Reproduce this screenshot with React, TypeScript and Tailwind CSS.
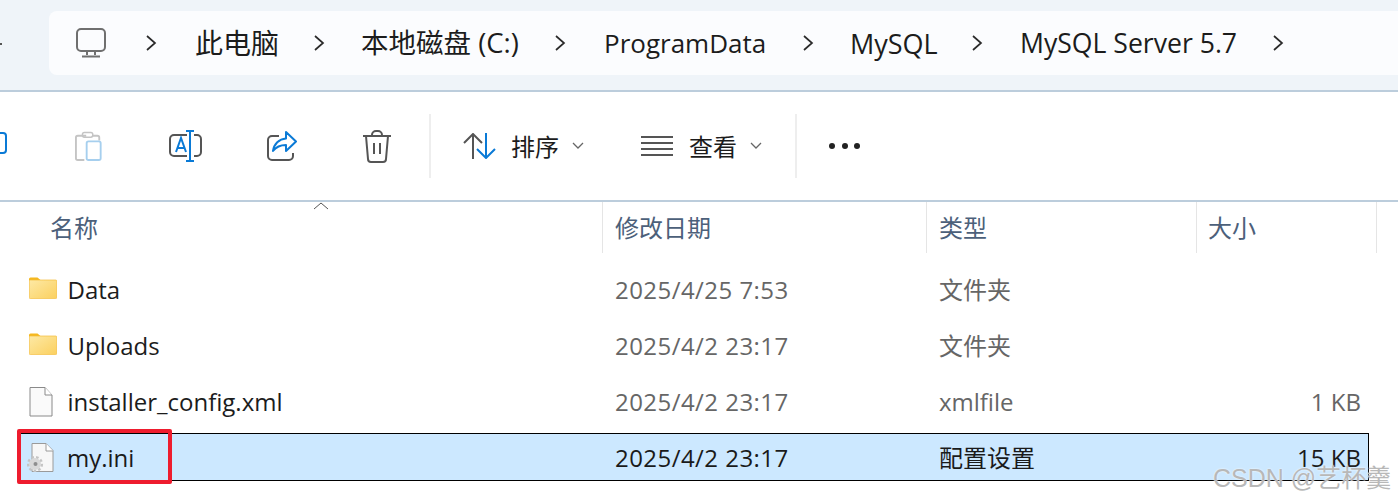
import type { ReactNode } from "react";

const font = { fontFamily: '"Open Sans", "Noto Sans CJK SC", sans-serif' };

function Chevron() {
  return (
    <svg width="12" height="18" viewBox="0 0 12 18" fill="none" className="shrink-0">
      <path d="M2 2l8 7-8 7" stroke="#2a2a2a" strokeWidth="1.7" />
    </svg>
  );
}

function Crumb({ children, w }: { children: ReactNode; w: string }) {
  return <span className={`leading-none text-[#1c1c1c] whitespace-nowrap shrink-0 ${w}`}>{children}</span>;
}

function FolderIcon() {
  return (
    <svg width="28" height="22" viewBox="0 0 28 22" className="shrink-0 mb-[5px]">
      <defs>
        <linearGradient id="fold" x1="0" y1="0" x2="1" y2="1">
          <stop offset="0" stopColor="#fde9a5" />
          <stop offset="1" stopColor="#fbd05f" />
        </linearGradient>
      </defs>
      <path d="M0 2A1.5 1.5 0 0 1 1.5 .5h7L12 3.5h-12z" fill="#f5b81f" />
      <rect x=".3" y="3" width="27.4" height="18.6" rx="1" fill="url(#fold)" stroke="#f3bc3a" strokeWidth="0.7" />
    </svg>
  );
}

function FileIcon() {
  return (
    <svg width="24" height="30" viewBox="0 0 24 30" className="shrink-0">
      <path d="M1 .5h15l7 7.5v21H1z" fill="#fafafa" stroke="#8a8a8a" />
      <path d="M16 .5V8h7" fill="#fff" stroke="#8a8a8a" />
    </svg>
  );
}

function IniIcon() {
  return (
    <svg width="27" height="30" viewBox="0 0 27 30" className="shrink-0">
      <path d="M5 .5h14l7 7v21H5z" fill="#f7f7f7" stroke="#9a9a9a" />
      <path d="M19 .5V8h7" fill="#fff" stroke="#9a9a9a" />
      <circle cx="8" cy="21" r="6.8" fill="none" stroke="#c4c4c4" strokeWidth="2.6" strokeDasharray="2.6 2.1" />
      <circle cx="8" cy="21" r="6" fill="#d9d9d9" />
      <path d="M8 17.5a3.5 3.5 0 0 0 0 7 3 3 0 0 1 0-7z" fill="#7d7d7d" />
      <circle cx="8.5" cy="21" r="2" fill="#8e8e8e" />
    </svg>
  );
}

const rows = [
  { name: "Data", date: "2025/4/25 7:53", type: "文件夹", size: "", icon: <FolderIcon /> },
  { name: "Uploads", date: "2025/4/2 23:17", type: "文件夹", size: "", icon: <FolderIcon /> },
  { name: "installer_config.xml", date: "2025/4/2 23:17", type: "xmlfile", size: "1 KB", icon: <FileIcon /> },
];

export default function App() {
  return (
    <div className="relative w-[1398px] h-[501px] overflow-hidden bg-white" style={font}>
      {/* tip of the forward arrow, cut off by the crop */}
      <div className="absolute left-0 top-[43px] w-[2px] h-[2px] bg-[#555]" />

      {/* address bar */}
      <div className="h-[92px] bg-[#eff4f9] border-b-2 border-[#bccddc] pt-[11px] pl-[49px]">
        <div className="h-16 bg-[#fbfcfe] rounded-l-lg flex items-center pl-[27px]">
          <svg width="30" height="30" viewBox="0 0 30 30" fill="none" className="shrink-0 mr-[39px]">
            <rect x="1" y="1" width="28" height="22" rx="4" stroke="#6f6f6f" strokeWidth="2" />
            <path d="M11 23v4M19 23v4M6 28.5h18" stroke="#6f6f6f" strokeWidth="2" />
          </svg>
          <Chevron />
          <Crumb w="text-[28px] w-[84px] ml-[38px] mr-[34px]">此电脑</Crumb>
          <Chevron />
          <Crumb w="text-[27.5px] w-[159px] ml-[36px] mr-[34px]">本地磁盘 (C:)</Crumb>
          <Chevron />
          <Crumb w="text-[26px] w-[162px] ml-[38px] mr-[36px]">ProgramData</Crumb>
          <Chevron />
          <Crumb w="text-[27px] w-[87px] ml-[36px] mr-[34px]">MySQL</Crumb>
          <Chevron />
          <Crumb w="text-[26.6px] w-[215px] ml-[37px] mr-[37px]">MySQL Server 5.7</Crumb>
          <Chevron />
        </div>
      </div>

      {/* command bar */}
      <div className="h-[110px] border-b-2 border-[#bccddc] flex items-center">
        <div className="w-[8px] h-[22px] -ml-[1px] border-2 border-l-0 border-[#0a7ad6] rounded-r-[4px] mb-[6px]" />
        <svg width="28" height="32" viewBox="0 0 30 32" fill="none" className="ml-[68px] shrink-0">
          <path d="M12 5h-9a2 2 0 0 0-2 2v22a2 2 0 0 0 2 2h7" stroke="#c4c4c4" strokeWidth="2" />
          <path d="M19 5h5a2 2 0 0 1 2 2v3" stroke="#c4c4c4" strokeWidth="2" />
          <rect x="8" y="1.5" width="11" height="5" rx="2" stroke="#c4c4c4" strokeWidth="1.6" />
          <rect x="12.5" y="11" width="15" height="20" rx="2" stroke="#a6cfee" strokeWidth="2" />
        </svg>
        <svg width="33" height="32" viewBox="0 0 33 32" fill="none" className="ml-[66px] shrink-0">
          <path d="M18 5H5a4 4 0 0 0-4 4v13a4 4 0 0 0 4 4h13M25 5h3a4 4 0 0 1 4 4v13a4 4 0 0 1-4 4h-3" stroke="#555" strokeWidth="2" />
          <path d="M17 1h8M17 31h8M21 1v30" stroke="#0a7ad6" strokeWidth="2" />
          <path d="M7 22l5-14 5 14M8.6 18h7" stroke="#0a7ad6" strokeWidth="2" />
        </svg>
        <svg width="30" height="30" viewBox="0 0 30 30" fill="none" className="ml-[65px] shrink-0">
          <path d="M12 5H5a4 4 0 0 0-4 4v16a4 4 0 0 0 4 4h17a4 4 0 0 0 4-4v-3" stroke="#555" strokeWidth="2" />
          <path d="M19 1l10 9.5L19 20v-6c-6 0-10 2-13 6 1-7 6-12 13-12.5z" stroke="#0a7ad6" strokeWidth="2" strokeLinejoin="round" />
        </svg>
        <svg width="30" height="33" viewBox="0 0 30 33" fill="none" className="ml-[65px] shrink-0">
          <path d="M1 6h28M10 6V5a4 4 0 0 1 4-4h2a4 4 0 0 1 4 4v1M4 6l2 23a3 3 0 0 0 3 3h12a3 3 0 0 0 3-3l2-23M12 13v11M18 13v11" stroke="#555" strokeWidth="2" />
        </svg>
        <div className="ml-[37px] w-[2px] h-16 bg-[#eeeeee]" />
        <svg width="33" height="26" viewBox="0 0 33 26" fill="none" className="ml-[32px] shrink-0">
          <path d="M10 26V1M1 10l9-9 9 9" stroke="#555" strokeWidth="2" />
          <path d="M23 0v25M14 16l9 9 9-9" stroke="#0a7ad6" strokeWidth="2" />
        </svg>
        <span className="ml-[15px] mt-[2px] text-[24px] leading-none text-[#1c1c1c]">排序</span>
        <svg width="12" height="8" viewBox="0 0 12 8" fill="none" className="ml-[13px] shrink-0">
          <path d="M1 1l5 5 5-5" stroke="#666" strokeWidth="1.3" />
        </svg>
        <div className="ml-[57px] w-[32px] h-[20px] flex flex-col justify-between shrink-0">
          <div className="h-[2px] bg-[#555]" />
          <div className="h-[2px] bg-[#555]" />
          <div className="h-[2px] bg-[#555]" />
          <div className="h-[2px] bg-[#555]" />
        </div>
        <span className="ml-[16px] mt-[2px] text-[24px] leading-none text-[#1c1c1c]">查看</span>
        <svg width="12" height="8" viewBox="0 0 12 8" fill="none" className="ml-[13px] shrink-0">
          <path d="M1 1l5 5 5-5" stroke="#666" strokeWidth="1.3" />
        </svg>
        <div className="ml-[33px] w-[2px] h-16 bg-[#eeeeee]" />
        <div className="ml-[32px] flex gap-[6.5px]">
          <div className="w-[6px] h-[6px] rounded-full bg-[#222]" />
          <div className="w-[6px] h-[6px] rounded-full bg-[#222]" />
          <div className="w-[6px] h-[6px] rounded-full bg-[#222]" />
        </div>
      </div>

      {/* column headers */}
      <div className="relative h-[51px] flex text-[24px] text-[#4c607a]">
        <svg width="16" height="8" viewBox="0 0 16 8" fill="none" className="absolute left-[313px] top-0">
          <path d="M1 7l7-6 7 6" stroke="#555" strokeWidth="1" />
        </svg>
        <div className="w-[603px] pl-[50px] flex items-center border-r-[1.5px] border-[#e5e5e5]">名称</div>
        <div className="w-[324px] pl-[12px] flex items-center border-r-[1.5px] border-[#e5e5e5]">修改日期</div>
        <div className="w-[270px] pl-[12px] flex items-center border-r-[1.5px] border-[#e5e5e5]">类型</div>
        <div className="w-[180px] pl-[11px] flex items-center border-r-[1.5px] border-[#e5e5e5]">大小</div>
      </div>

      {/* file rows */}
      <div className="pt-[9px] text-[24px]">
        {rows.map((r) => (
          <div key={r.name} className="h-[56px] flex items-center">
            <div className="w-[603px] pl-[29px] flex items-center">
              <div className="w-[38.5px] flex">{r.icon}</div>
              <span className="text-[#1c1c1c]">{r.name}</span>
            </div>
            <div className="w-[324px] pl-[12px] text-[#666] tracking-[0.45px]">{r.date}</div>
            <div className="w-[270px] pl-[12px] text-[#666]">{r.type}</div>
            <div className="w-[164px] text-right text-[#666]">{r.size}</div>
          </div>
        ))}
        <div className="h-[48px] mt-[3px] ml-[18px] w-[1351px] pt-[1px] flex items-center bg-[#cce8ff] border border-black text-[#1a1a1a]">
          <div className="w-[584px] pl-[8px] flex items-center">
            <div className="w-[40px] flex"><IniIcon /></div>
            <span>my.ini</span>
          </div>
          <div className="w-[324px] pl-[12px] tracking-[0.45px]">2025/4/2 23:17</div>
          <div className="w-[270px] pl-[12px]">配置设置</div>
          <div className="w-[164px] text-right">15 KB</div>
        </div>
      </div>

      {/* annotation box */}
      <div className="absolute left-[17px] top-[429px] w-[155px] h-[55px] border-[4px] border-[#ee1c2e] rounded-[2px]" />
      {/* watermark */}
      <div
        className="absolute left-[1213px] top-[466px] text-[25px] leading-none text-[#b8b8b8] whitespace-nowrap [text-shadow:0_0_2px_white]"
        style={{ fontFamily: '"Liberation Sans", "Noto Sans CJK SC", sans-serif' }}
      >
        CSDN @艺杯羹
      </div>
    </div>
  );
}
